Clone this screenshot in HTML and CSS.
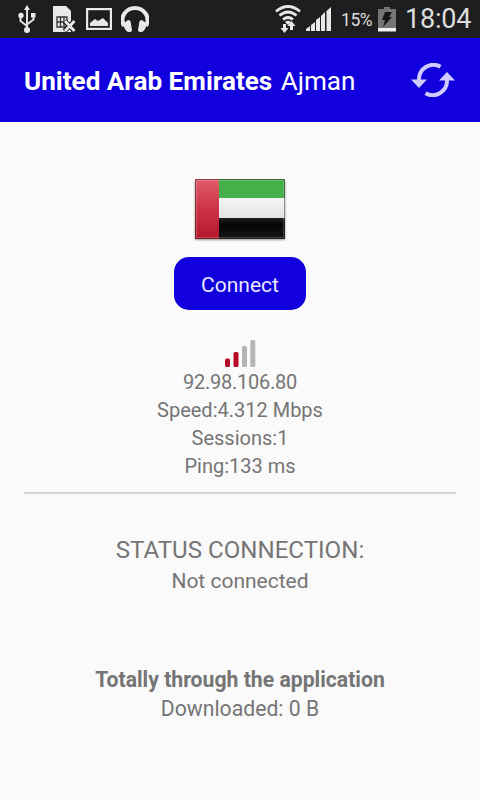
FILE: index.html
```
<!DOCTYPE html>
<html lang="en">
<head>
  <meta charset="UTF-8" />
  <meta name="viewport" content="width=device-width, initial-scale=1.0" />
  <title>United Arab Emirates Ajman</title>
  <link rel="stylesheet" href="styles.css">
</head>
<body>
  <div class="statusbar">
    <svg class="usb" width="20" height="28" viewBox="0 0 20 28">
      <path d="M10 4v19M3.500 12v4l6.500 5M16.500 11v3.500l-6.500 5" fill="none" stroke="#e8e8e8" stroke-width="1.900" />
      <path d="M10 0l3 5H7zM14 8h4.500v4.500H14z" fill="#e8e8e8" />
      <circle cx="4" cy="10.500" r="2.700" fill="#e8e8e8" />
      <circle cx="10" cy="25" r="3" fill="#e8e8e8" />
    </svg>
    <svg class="sim" width="23" height="28" viewBox="0 0 23 28">
      <path d="M0 1h13l5 5v21H0z" fill="#e8e8e8" />
      <path d="M4 12h10v10H4zM7.500 12v10M11 12v10M4 17h10" fill="none" stroke="#333" stroke-width="1.300" />
      <path d="M11.500 16l10 10M21.500 16l-10 10" stroke="#1e1e20" stroke-width="5" />
      <path d="M12 16l9.500 10M21.500 16L12 26" stroke="#e8e8e8" stroke-width="2.800" />
    </svg>
    <svg class="picture" width="26" height="22" viewBox="0 0 26 22">
      <rect x="1.100" y="1.100" width="23.800" height="19.800" fill="none" stroke="#e8e8e8" stroke-width="2.200" />
      <path d="M4 18v-3l5-4 3 2 5-3 5 5v3z" fill="#e8e8e8" />
    </svg>
    <svg class="headphones" width="28" height="27" viewBox="0 0 28 27">
      <path d="M3 20C-2 10 6 2 14 2s16 8 11 18" fill="none" stroke="#e8e8e8" stroke-width="4" />
      <path d="M3 17l4-3q3 0 3 4l1 6q0 2-3 2-3 0-5-5zM25 17l-4-3q-3 0-3 4l-1 6q0 2 3 2 3 0 5-5z" fill="#e8e8e8" />
    </svg>
    <div class="status-right">
      <svg class="wifi" width="26" height="29" viewBox="0 0 26 29">
        <path d="M1 6.500q12-10 24 0M4.500 10.500q8.500-7 17 0M8 14.500q5-4 10 0" fill="none" stroke="#e8e8e8" stroke-width="2.800" />
        <path d="M10 17q3-2.500 6 0L13 20z" fill="#e8e8e8" />
        <path d="M8 19h3v4h2.500L9.500 28 5.500 23H8zM15 25v-4h-2.500l4-5 4 5H18v4z" fill="#e8e8e8" />
      </svg>
      <svg class="signal" width="25" height="25" viewBox="0 0 25 25">
        <path d="M0 24v-2l4-3v5zM5 24v-6l4-3v9zM10 24V13l4-3v14zM15 24V9l4-4v19zM20.500 24V4L25 0v24z" fill="#e8e8e8" />
      </svg>
      <span class="percent">15%</span>
      <svg class="battery" width="18" height="25" viewBox="0 0 18 25">
        <path d="M0 2h6V0h6v2h6v19H0z" fill="#757575" />
        <path d="M0 21h18v3.500H0z" fill="#f2f2f2" />
        <path d="M7 5h7l-3 5h3L5 20l2-7H4z" fill="#151515" />
      </svg>
      <span class="clock">18:04</span>
    </div>
  </div>

  <div class="header">
    <h1 class="title"><b>United Arab Emirates</b> Ajman</h1>
    <button class="refresh" aria-label="Refresh">
      <svg width="44" height="34" viewBox="0 0 44 34">
        <path d="M8 17A14.500 14.500 0 0 1 29.500 3.700M36 17A14.500 14.500 0 0 1 14.500 30.300" fill="none" stroke="#cfcbff" stroke-width="4" />
        <path d="M0 16.500h16L8 25zM28 17.500h16L36 9z" fill="#cfcbff" />
      </svg>
    </button>
  </div>

  <div class="content">
    <svg class="flag" width="94" height="66" viewBox="0 0 94 66">
      <defs>
        <linearGradient id="red" x1="0" y1="0" x2="0" y2="1">
          <stop offset="0" stop-color="#df5c68" />
          <stop offset="0.500" stop-color="#cc3446" />
          <stop offset="1" stop-color="#b3172a" />
        </linearGradient>
        <linearGradient id="white" x1="0" y1="0" x2="0" y2="1">
          <stop offset="0" stop-color="#f5f5f5" />
          <stop offset="1" stop-color="#e2e2e2" />
        </linearGradient>
        <linearGradient id="black" x1="0" y1="0" x2="0" y2="1">
          <stop offset="0" stop-color="#202020" />
          <stop offset="0.300" stop-color="#050505" />
          <stop offset="1" stop-color="#151515" />
        </linearGradient>
      </defs>
      <rect class="flag-shadow" x="2" y="3" width="90" height="59" rx="1" />
      <path d="M26 2h66v19H26z" fill="#45af4a" />
      <path d="M26 21h66v20H26z" fill="url(#white)" />
      <path d="M26 41h66v21H26z" fill="url(#black)" />
      <path d="M2 2h24v60H2z" fill="url(#red)" />
      <rect x="3.500" y="3.500" width="87" height="57" fill="none" stroke="#fff" stroke-opacity="0.200" />
      <rect x="2.500" y="2.500" width="89" height="59" rx="1" fill="none" stroke="#30201c" stroke-opacity="0.500" />
    </svg>

    <button class="connect">Connect</button>

    <div class="server">
      <svg class="quality" width="32" height="28" viewBox="0 0 32 28">
        <rect x="1" y="18.500" width="5" height="8.500" rx="1.500" fill="#b50f28" />
        <rect x="9.500" y="12" width="5" height="15" rx="1.500" fill="#b50f28" />
        <rect x="18" y="6" width="5" height="21" rx="1.500" fill="#b5b5b5" />
        <rect x="26.300" y="0" width="5" height="27" rx="1.500" fill="#b5b5b5" />
      </svg>
      <p class="ip">92.98.106.80</p>
      <p>Speed:4.312 Mbps</p>
      <p>Sessions:1</p>
      <p>Ping:133 ms</p>
    </div>

    <div class="status">
      <h2>STATUS CONNECTION:</h2>
      <p>Not connected</p>
    </div>

    <div class="traffic">
      <p><b>Totally through the application</b></p>
      <p>Downloaded: 0 B</p>
    </div>
  </div>
</body>
</html>
```
FILE: styles.css
```
* {
  margin: 0;
  padding: 0;
  box-sizing: border-box;
}
body {
  background-color: #fafafa;
  color: #757575;
  font-family: Roboto, sans-serif;
  font-size: 20px;
  line-height: 28px;
  min-height: 100vh;
}
svg {
  display: block;
  flex-shrink: 0;
}
.statusbar {
  display: flex;
  align-items: center;
  height: 38px;
  padding: 0 9px 0 17px;
  background-color: #1e1e20;
  color: #dedede;
}
.sim {
  margin-left: 16px;
}
.picture {
  margin-left: 10px;
}
.headphones {
  margin-left: 9px;
}
.status-right {
  display: flex;
  align-items: center;
  margin-left: auto;
}
.signal {
  margin-left: 5px;
  margin-right: 10px;
}
.percent {
  width: 32px;
  font-size: 17.5px;
  letter-spacing: -0.4px;
  white-space: nowrap;
  padding-top: 2px;
}
.battery {
  margin-left: 5px;
  margin-right: 9px;
}
.clock {
  width: 66px;
  font-size: 27px;
  letter-spacing: -0.2px;
}
.header {
  display: flex;
  align-items: center;
  justify-content: space-between;
  height: 84px;
  padding: 0 25px 0 24px;
  background-color: #1100dd;
  color: white;
}
.title {
  padding-top: 2px;
  font-size: 26.1px;
  font-weight: 400;
  white-space: nowrap;
  word-spacing: 1px;
}
.title b {
  margin-right: 1px;
  font-weight: 700;
  word-spacing: 0;
}
.refresh {
  border: none;
  background: none;
  cursor: pointer;
}
.content {
  display: flex;
  flex-direction: column;
  align-items: center;
  padding: 55px 24px 0;
  text-align: center;
}
.flag-shadow {
  fill: #000;
  filter: drop-shadow(0 1px 1px rgba(0, 0, 0, 0.4));
}
.connect {
  width: 132px;
  height: 53px;
  margin-top: 14px;
  padding-top: 2px;
  border: none;
  border-radius: 15px;
  background-color: #1100dd;
  color: #e9e7ff;
  font-family: inherit;
  font-size: 21px;
  cursor: pointer;
}
.server {
  width: 100%;
  height: 154px;
  margin-top: 30px;
  border-bottom: 2px solid #d5d5d5;
}
.server p {
  white-space: nowrap;
}
.server .ip {
  letter-spacing: -0.25px;
}
.quality {
  margin: 0 auto;
}
.status {
  margin-top: 40px;
  font-size: 21px;
}
.status h2 {
  font-size: 24.1px;
  font-weight: 400;
  line-height: 32px;
}
.status p {
  padding-top: 1px;
}
.traffic {
  margin-top: 70px;
  font-size: 21.2px;
  line-height: 29px;
}
```
